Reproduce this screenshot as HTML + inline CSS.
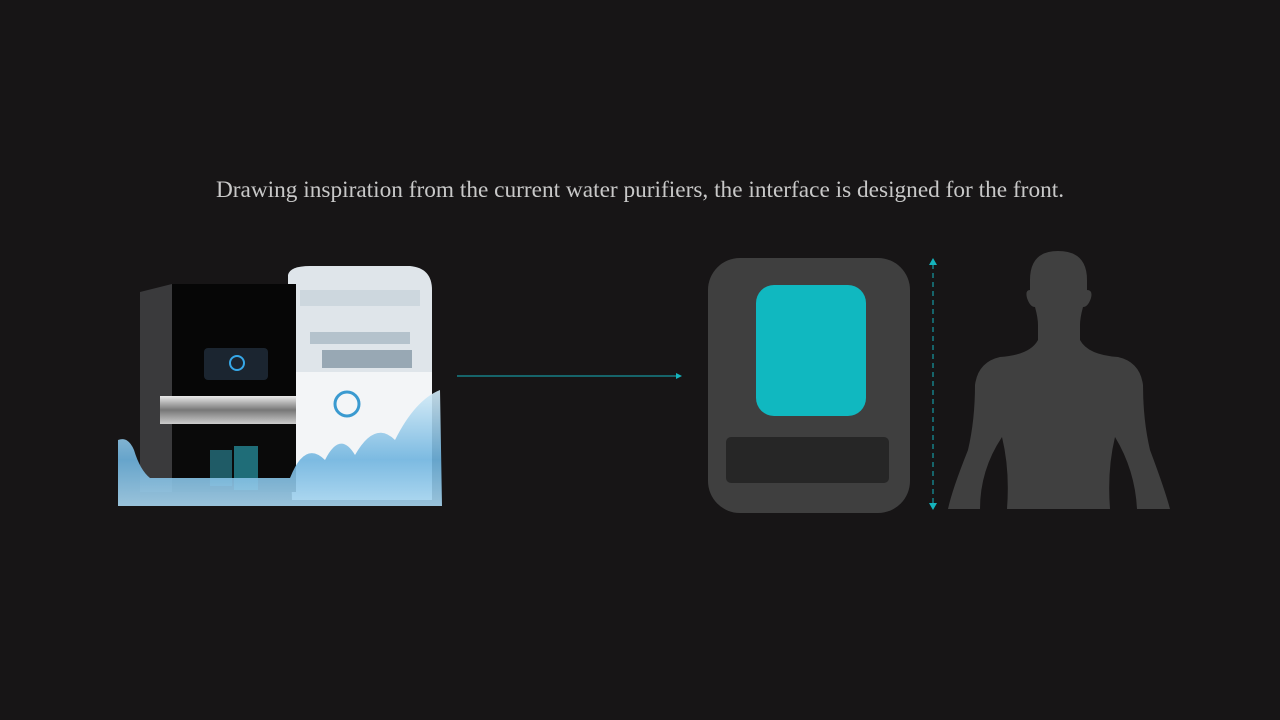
<!DOCTYPE html>
<html><head><style>
body{margin:0;width:1280px;height:720px;background:#171516;overflow:hidden;position:relative;font-family:"Liberation Serif",serif}
.t{position:absolute;top:177px;left:0;width:1280px;text-align:center;color:#c8c8c8;font-size:23.3px;white-space:nowrap}
</style></head><body>
<div class="t">Drawing inspiration from the current water purifiers, the interface is designed for the front.</div>
<svg width="1280" height="720" style="position:absolute;left:0;top:0">
<defs>
<linearGradient id="w" x1="0" y1="0" x2="0" y2="1"><stop offset="0" stop-color="#d4ecf8"/><stop offset=".6" stop-color="#6fb4df"/><stop offset="1" stop-color="#a8d6f0"/></linearGradient>
<linearGradient id="m" x1="0" y1="0" x2="0" y2="1"><stop offset="0" stop-color="#eaeaea"/><stop offset=".5" stop-color="#777"/><stop offset="1" stop-color="#ccc"/></linearGradient>
</defs>
<path d="M288 275 Q290 266 310 266 L410 266 Q432 268 432 290 L432 500 L292 500 L288 380 Z" fill="#dfe5ea"/>
<rect x="292" y="372" width="140" height="128" fill="#f3f5f7"/>
<rect x="300" y="290" width="120" height="16" fill="#cdd7de"/>
<rect x="310" y="332" width="100" height="12" fill="#b4c2cc"/>
<rect x="322" y="350" width="90" height="18" fill="#98a8b4"/>
<circle cx="347" cy="404" r="12" fill="none" stroke="#3a9ad0" stroke-width="3"/>
<path d="M140 292 L172 284 L172 492 L140 492 Z" fill="#3a3a3c"/>
<rect x="172" y="284" width="124" height="112" fill="#060606"/>
<rect x="204" y="348" width="64" height="32" rx="4" fill="#1b2530"/>
<circle cx="237" cy="363" r="7" fill="none" stroke="#36a8e8" stroke-width="2"/>
<rect x="160" y="396" width="136" height="28" fill="url(#m)"/>
<rect x="172" y="424" width="124" height="68" fill="#0a0a0a"/>
<rect x="210" y="450" width="22" height="36" fill="#1f5b66"/>
<rect x="234" y="446" width="24" height="44" fill="#1f6d78"/>
<path d="M118 440 Q128 436 134 450 Q140 470 150 478 L290 478 Q305 440 325 460 Q340 430 355 455 Q375 420 395 440 Q415 400 440 390 L442 506 L118 506 Z" fill="url(#w)" opacity=".9"/>
<line x1="457" y1="376" x2="676" y2="376" stroke="#15b4bd" stroke-width="1"/>
<path d="M676 373 L682 376 L676 379 Z" fill="#15b4bd"/>
<rect x="708" y="258" width="202" height="255" rx="32" fill="#3f3f3f"/>
<rect x="756" y="285" width="110" height="131" rx="18" fill="#10b8c0"/>
<rect x="726" y="437" width="163" height="46" rx="5" fill="#262626"/>
<line x1="933" y1="264" x2="933" y2="505" stroke="#15b4bd" stroke-width="1" stroke-dasharray="5,4"/>
<path d="M929 265 L933 258 L937 265 Z M929 503 L933 510 L937 503 Z" fill="#15b4bd"/>
<path d="M1058 251 Q1030 251 1030 280 L1030 290 Q1025 290 1027 298 Q1030 307 1035 307 Q1038 318 1038 325 L1038 340 Q1030 355 1000 357 Q978 362 975 385 Q975 420 968 450 Q952 490 948 509 L980 509 Q980 470 1002 437 Q1010 470 1007 509 L1110 509 Q1107 470 1115 437 Q1135 470 1137 509 L1170 509 Q1165 490 1150 450 Q1143 420 1143 385 Q1140 362 1118 357 Q1088 355 1080 340 L1080 325 Q1080 318 1083 307 Q1088 307 1091 298 Q1093 290 1087 290 L1087 280 Q1087 251 1058 251 Z" fill="#404040"/>
</svg>
</body></html>
